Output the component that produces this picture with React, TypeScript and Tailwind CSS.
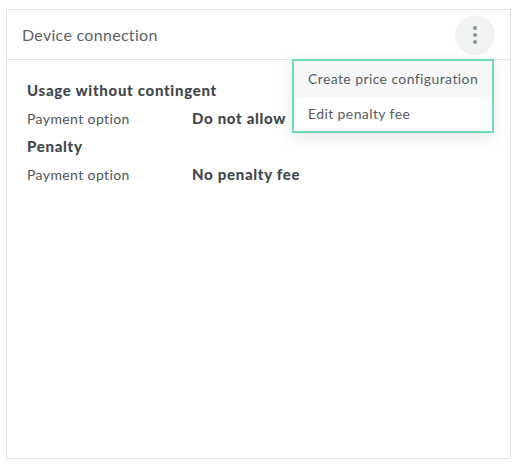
import React from 'react';

const rows = [
  { type: 'heading', text: 'Usage without contingent' },
  { type: 'field', label: 'Payment option', value: 'Do not allow' },
  { type: 'heading', text: 'Penalty' },
  { type: 'field', label: 'Payment option', value: 'No penalty fee' },
] as const;

const menuItems = ['Create price configuration', 'Edit penalty fee'];

export default function App() {
  return (
    <div className="min-h-screen bg-white pl-[6px] pt-[9px] font-['Lato',sans-serif]">
      <div className="relative flex h-[450px] w-[505px] flex-col border border-[#dfe2e3] bg-white">
        {/* Header */}
        <div className="flex h-[50px] items-center justify-between border-b border-[#e3e5e6] pl-[15px] pr-[15px]">
          <h2 className="text-[16px] tracking-[0.3px] text-[#5c6267]">Device connection</h2>
          <button className="flex h-10 w-10 items-center justify-center rounded-full bg-[#f1f2f2]">
            <svg width="4" height="18" viewBox="0 0 4 18" fill="#8b8f92">
              <circle cx="2" cy="2" r="2" />
              <circle cx="2" cy="9" r="2" />
              <circle cx="2" cy="16" r="2" />
            </svg>
          </button>
        </div>

        {/* Body */}
        <div className="flex flex-col pl-[20px] pt-[16px]">
          {rows.map((row, i) =>
            row.type === 'heading' ? (
              <div key={i} className="flex h-[28px] items-center text-[15px] font-black tracking-[0.7px] text-[#42484c]">
                {row.text}
              </div>
            ) : (
              <div key={i} className="flex h-[28px] items-center">
                <span className="w-[165px] text-[14px] tracking-[0.4px] text-[#4f555a]">{row.label}</span>
                <span className="text-[15px] font-black tracking-[0.7px] text-[#42484c]">{row.value}</span>
              </div>
            )
          )}
        </div>

        {/* Actions menu */}
        <div className="absolute left-[285px] top-[49px] w-[202px] border-2 border-[#6ddcb2] bg-white shadow-[0_4px_14px_rgba(0,0,0,0.10)]">
          {menuItems.map((item, i) => (
            <div
              key={item}
              className={`pl-[14px] text-[14px] tracking-[0.4px] text-[#575d62] ${i === 0 ? 'h-[36px] bg-[#f7f8f9] leading-[36px]' : 'h-[34px] leading-[34px]'}`}
            >
              {item}
            </div>
          ))}
        </div>
      </div>
    </div>
  );
}
